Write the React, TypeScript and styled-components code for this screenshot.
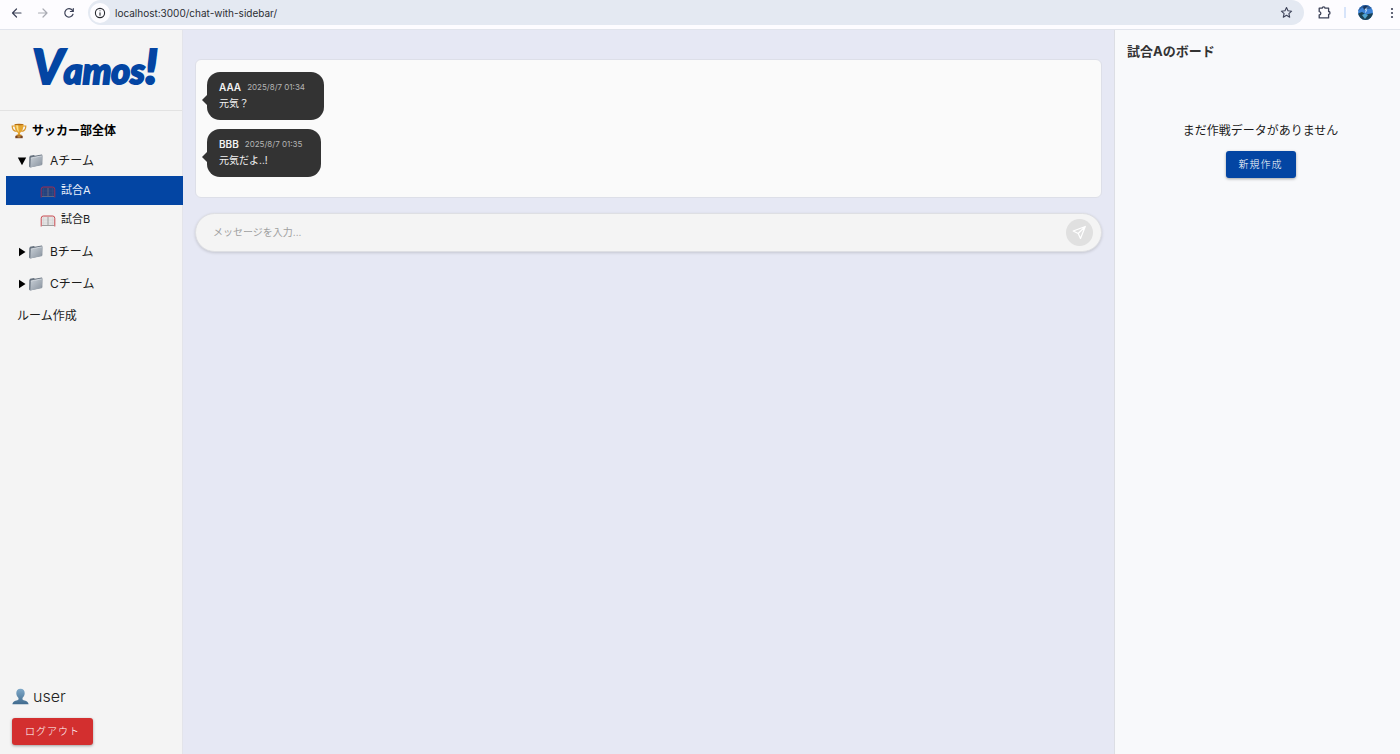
import React, { useState } from "react";
import styled, { createGlobalStyle, css } from "styled-components";

const GlobalStyle = createGlobalStyle`
  * { box-sizing: border-box; }
  html, body, #root { height: 100%; }
  body {
    margin: 0;
    font-family: Inter, "Noto Sans CJK JP", sans-serif;
    font-size: 12px;
    line-height: 16px;
    color: #1c1c1c;
    background: #e6e8f4;
  }
  button, input { font: inherit; color: inherit; }
  button { border: 0; padding: 0; background: none; cursor: pointer; }
  h2, p { margin: 0; }
`;

const Page = styled.div`
  display: flex;
  flex-direction: column;
  min-height: 100%;
`;

const BrowserBar = styled.header`
  display: flex;
  align-items: center;
  height: 30px;
  padding: 0 2px 4px 10px;
  background: #fdfcff;
  border-bottom: 1px solid #e1e4ec;
  color: #3d4258;
`;

const BarGroup = styled.div`
  display: flex;
  align-items: center;
  gap: 13px;
  padding-right: 13px;
`;

const BarButton = styled.button<{ $faded?: boolean }>`
  display: flex;
  align-items: center;
  justify-content: center;
  min-width: 13px;
  height: 16px;
  color: ${(p) => (p.$faded ? "#a9abb3" : "#3d4258")};
`;

const AddressBar = styled.div`
  display: flex;
  flex: 1;
  align-items: center;
  height: 25px;
  padding: 0 11px 0 2px;
  border-radius: 13px;
  background: #e4e9f2;
`;

const SiteInfo = styled.button`
  display: flex;
  align-items: center;
  justify-content: center;
  width: 20px;
  height: 20px;
  border-radius: 50%;
  background: #fdfcff;
  color: #26282e;
`;

const UrlInput = styled.input`
  flex: 1;
  min-width: 0;
  border: 0;
  outline: 0;
  padding: 0 5px;
  background: none;
  font-size: 10px;
  color: #2b2d33;
`;

const BarActions = styled.div`
  display: flex;
  align-items: center;
  gap: 12px;
  padding-left: 13px;
`;

const BarDivider = styled.span`
  width: 2px;
  height: 11px;
  background: #d7e4fa;
`;

const Workspace = styled.div`
  display: flex;
  flex: 1;
`;

const Sidebar = styled.aside`
  display: flex;
  flex-direction: column;
  flex: 0 0 183px;
  background: #f4f4f4;
  border-right: 1px solid #e3e4ea;
`;

const Brand = styled.div`
  display: flex;
  align-items: center;
  justify-content: center;
  height: 81px;
  padding: 0 0 4px 8px;
  border-bottom: 1px solid #e2e2e2;
`;

const Logo = styled.a`
  font-family: Lato, sans-serif;
  font-size: 36px;
  line-height: 48px;
  font-weight: 900;
  font-style: italic;
  color: #0345a3;
  text-decoration: none;
  -webkit-text-stroke: 2px #0345a3;
  paint-order: stroke fill;
  stroke-linejoin: round;
`;

const LogoTall = styled.span`
  font-size: 48px;
`;

const Nav = styled.nav`
  display: flex;
  flex-direction: column;
  padding: 5px 0 0 6px;
`;

const RoomTitle = styled.div`
  display: flex;
  align-items: center;
  gap: 5px;
  height: 30px;
  padding-left: 5px;
  font-weight: 700;
  color: #000;
`;

const FolderRow = styled.button<{ $open?: boolean }>`
  display: flex;
  align-items: center;
  height: ${(p) => (p.$open ? 30 : 32)}px;
  padding-left: 11px;
  text-align: left;
`;

const FolderName = styled.span`
  margin-left: 6px;
`;

const MatchList = styled.div`
  display: flex;
  flex-direction: column;
  margin-bottom: 2px;
`;

const MatchRow = styled.button<{ $active: boolean }>`
  display: flex;
  align-items: center;
  gap: 5px;
  height: 29px;
  padding: 0 0 1px 34px;
  font-size: 11px;
  margin-right: -1px;
  svg { margin-top: 4px; }
  ${(p) =>
    p.$active &&
    css`
      background: #0345a3;
      color: #e8eefa;
    `}
`;

const SidebarFooter = styled.div`
  display: flex;
  flex-direction: column;
  align-items: flex-start;
  gap: 12px;
  margin-top: auto;
  padding: 0 12px 9px;
`;

const UserRow = styled.div`
  display: flex;
  align-items: center;
  gap: 4px;
  font-size: 16px;
  line-height: 20px;
  font-weight: 300;
  color: #222;
`;

const ActionButton = styled.button<{ $tone: "danger" | "primary" }>`
  height: 27px;
  padding: 0 13px 1px;
  border-radius: 3px;
  background: ${(p) => (p.$tone === "danger" ? "#d32f2f" : "#0345a3")};
  color: #fff;
  font-size: 10px;
  font-weight: 300;
  letter-spacing: 1px;
  box-shadow: 0 1px 3px rgba(0, 0, 0, 0.35);
`;

const Main = styled.main`
  display: flex;
  flex-direction: column;
  flex: 1;
  min-width: 0;
  gap: 15px;
  padding: 29px 12px 12px;
`;

const MessageList = styled.section`
  display: flex;
  flex-direction: column;
  align-items: flex-start;
  gap: 9px;
  padding: 12px 11px 20px;
  border: 1px solid #dddfe8;
  border-radius: 6px;
  background: #fafafa;
`;

const Bubble = styled.article`
  position: relative;
  padding: 7px 19px 9px 12px;
  border-radius: 13px;
  background: #333;
  color: #f2f2f2;
  font-size: 10px;
  &::before {
    content: "";
    position: absolute;
    left: -5px;
    top: 22px;
    border: solid transparent;
    border-width: 6px 6px 6px 0;
    border-right-color: #333;
  }
`;

const BubbleHead = styled.div`
  display: flex;
  align-items: center;
  gap: 6px;
`;

const Sender = styled.strong`
  font-weight: 600;
`;

const SentAt = styled.time`
  font-size: 8px;
  color: #b5b5b5;
`;

const Composer = styled.form`
  display: flex;
  align-items: center;
  height: 39px;
  padding: 0 8px 1px 17px;
  border: 1px solid #dedfe3;
  border-radius: 20px;
  background: #f4f4f4;
  box-shadow: 0 1px 3px rgba(0, 0, 0, 0.15);
`;

const MessageInput = styled.input`
  flex: 1;
  min-width: 0;
  padding: 0;
  border: 0;
  outline: 0;
  background: none;
  font-size: 10px;
  &::placeholder { color: #a0a0a0; opacity: 1; }
`;

const SendButton = styled.button`
  display: flex;
  align-items: center;
  justify-content: center;
  width: 27px;
  height: 27px;
  border-radius: 50%;
  background: #e0e0e0;
`;

const BoardPanel = styled.aside`
  flex: 0 0 286px;
  padding: 11px 6px 11px 12px;
  border-left: 1px solid #dcdee4;
  background: #f8f9fb;
`;

const BoardTitle = styled.h2`
  font-size: 13px;
  line-height: 20px;
  font-weight: 700;
  color: #333;
`;

const EmptyBoard = styled.div`
  display: flex;
  flex-direction: column;
  align-items: center;
  gap: 12px;
  padding-top: 62px;
`;

const stroke = {
  fill: "none",
  stroke: "currentColor",
  strokeLinecap: "round" as const,
  strokeLinejoin: "round" as const,
};

const ArrowLeft = () => (
  <svg width="12" height="12" viewBox="0 0 12 12" {...stroke} strokeWidth="1.2">
    <path d="M10 6H1.500M5.500 2l-4 4 4 4" />
  </svg>
);

const ArrowRight = () => (
  <svg width="12" height="12" viewBox="0 0 12 12" {...stroke} strokeWidth="1.2">
    <path d="M1.5 6H10M6 2l4 4-4 4" />
  </svg>
);

const Reload = () => (
  <svg width="12" height="12" viewBox="0 0 12 12" {...stroke} strokeWidth="1.2">
    <path d="M10 7.2A4.2 4.2 0 1 1 9.4 3.4L10.2 4.4M10.3 1.6v2.9H7.4" />
  </svg>
);

const Info = () => (
  <svg width="12" height="12" viewBox="0 0 12 12" {...stroke} strokeWidth="1.1">
    <circle cx="6" cy="6" r="4.6" />
    <path d="M6 5.7v2.6M6 3.7v.1" />
  </svg>
);

const Star = () => (
  <svg width="13" height="13" viewBox="0 0 13 13" {...stroke} strokeWidth="1.1">
    <path d="m6.5 1.5 1.5 3.3 3.6.4-2.7 2.4.8 3.6-3.2-1.9-3.2 1.9.8-3.6L1.4 5.2 5 4.8z" />
  </svg>
);

const Puzzle = () => (
  <svg width="15" height="15" viewBox="0 0 15 15" {...stroke} strokeWidth="1.3">
    <path d="M2.200 3.200h3C5.200 1.400 8 1.400 8 3.200h3.600v3.300c1.900 0 1.900 2.800 0 2.800v3.600H2.200V10c2.200-.2 2.200-3.200 0-3.400z" />
  </svg>
);

const Avatar = () => (
  <svg width="15" height="15" viewBox="0 0 15 15">
    <defs>
      <clipPath id="avatarClip"><circle cx="7.500" cy="7.500" r="7.400" /></clipPath>
    </defs>
    <g clipPath="url(#avatarClip)">
      <path d="M0 0h15v15H0z" fill="#3c82d6" />
      <path d="M0 0h15v3L11 4 4 3 0 6z" fill="#2d5f9e" />
      <path d="M0 8.500 4 7l4 2.500L15 8v7H0z" fill="#1c4254" />
      <path d="m4 10 3-1.500L10 10l-3 4z" fill="#4fa3cf" />
      <path d="M5 1.500 8 .5l2 1.500-2 2.500-2 .5z" fill="#17365f" />
      <path d="m9 2.500-2 2.200h1.600L7.500 7.500" fill="none" stroke="#d9efff" strokeWidth=".9" />
    </g>
  </svg>
);

const Dots = () => (
  <svg width="4" height="12" viewBox="0 0 4 12" fill="#3d4258">
    <circle cx="2" cy="2" r="1.1" />
    <circle cx="2" cy="6" r="1.1" />
    <circle cx="2" cy="10" r="1.1" />
  </svg>
);

const Trophy = () => (
  <svg width="16" height="16" viewBox="0 0 16 16">
    <path d="M4 3H1.2c-.1 3 1.5 5 4.4 5.5M12 3h2.8c.1 3-1.5 5-4.4 5.5" fill="none" stroke="#d9962a" strokeWidth="1.2" />
    <path d="M3.5 1.2h9C12.5 6 11 9 9 9.7v2.2H7V9.7C5 9 3.5 6 3.5 1.2z" fill="#e5a52f" />
    <path d="M5.2 2h2c0 3 .3 5 .8 7C6.300 8 5.300 5.500 5.200 2z" fill="#ffe189" />
    <ellipse cx="8" cy="1.500" rx="4.500" ry=".8" fill="#b36b12" />
    <path d="M5.800 11.500h4.400l.8 1.500H5z" fill="#c98722" />
    <path d="M4.300 12.800h7.400v2.400H4.300z" fill="#76401f" />
    <path d="M6.500 13.400h3v1h-3z" fill="#e0ae55" />
  </svg>
);

const Folder = () => (
  <svg width="16" height="16" viewBox="0 0 16 16">
    <defs>
      <linearGradient id="folderFront" x1="0" y1="0" x2="1" y2="1">
        <stop offset="0" stopColor="#c9d0d7" />
        <stop offset="1" stopColor="#87919d" />
      </linearGradient>
    </defs>
    <path d="M1.300 4.200 2 2.800l4-.8.8.8 7-1.300.5.500v9.500L2 14.500l-.9-1z" fill="#66717e" />
    <path d="m2.800 5 11-2.200.7.500-.8 9L2.300 14.500z" fill="url(#folderFront)" />
    <path d="m2.800 5 11-2.200" stroke="#e8edf1" strokeWidth=".7" />
  </svg>
);

const Triangle = ({ open }: { open: boolean }) => (
  <svg width="11" height="10" viewBox="0 0 11 10" fill="#000">
    <path d={open ? "M.8 1.500h8.400L5 9.200z" : "M2 .8 8.500 5 2 9.200z"} />
  </svg>
);

const Goal = ({ active }: { active: boolean }) => (
  <svg width="16" height="12" viewBox="0 0 16 12">
    <path d="M1.500 11V3l1.500-2h10l1.500 2v8z" fill={active ? "#25427d" : "#e4e3e3"} />
    <path d="M3.500 2v8M12.500 2v8M2 5h12M2 8h12" stroke={active ? "#34508a" : "#d2d0d0"} strokeWidth=".5" />
    <path d="M8 2v8M2 10.500h12" stroke={active ? "#6f7184" : "#8d8d8d"} strokeWidth=".8" />
    <path d="M1.200 11.500V3.200Q1.300 1 3.300 1h9.400q2 0 2.100 2.200v8.300" fill="none" stroke={active ? "#a02e51" : "#c94b51"} strokeWidth="1" />
  </svg>
);

const Person = () => (
  <svg width="17" height="17" viewBox="0 0 17 17">
    <defs>
      <linearGradient id="personFill" x1="0" y1="0" x2="0" y2="1">
        <stop offset="0" stopColor="#7fa9c9" />
        <stop offset="1" stopColor="#416b8e" />
      </linearGradient>
    </defs>
    <path
      d="M8.500.8c2.800 0 4.300 1.800 4.200 4.500-.1 2-1 3.700-2.200 4.800v1.400c.5 1 5.700 1 6.100 4.700H.4c.4-3.700 5.600-3.700 6.100-4.700v-1.400C5.300 9 4.400 7.300 4.300 5.300 4.200 2.600 5.700.8 8.500.8z"
      fill="url(#personFill)"
    />
  </svg>
);

const Send = () => (
  <svg width="15" height="15" viewBox="0 0 15 15" {...stroke} stroke="#fff" strokeWidth="1.200">
    <path d="M13.300 1.500 1.200 6l5 2.500 2.300 5zM13.300 1.500 6.200 8.500" />
  </svg>
);

const messages = [
  { sender: "AAA", sentAt: "2025/8/7 01:34", body: "元気？" },
  { sender: "BBB", sentAt: "2025/8/7 01:35", body: "元気だよ..!" },
];

const matches = ["試合A", "試合B"];

export default function App() {
  const [selected, setSelected] = useState("試合A");
  const [draft, setDraft] = useState("");

  return (
    <>
      <GlobalStyle />
      <Page>
        <BrowserBar>
          <BarGroup>
            <BarButton aria-label="戻る"><ArrowLeft /></BarButton>
            <BarButton aria-label="進む" $faded><ArrowRight /></BarButton>
            <BarButton aria-label="再読み込み"><Reload /></BarButton>
          </BarGroup>
          <AddressBar>
            <SiteInfo aria-label="サイト情報"><Info /></SiteInfo>
            <UrlInput aria-label="アドレス" defaultValue="localhost:3000/chat-with-sidebar/" />
            <BarButton aria-label="ブックマーク"><Star /></BarButton>
          </AddressBar>
          <BarActions>
            <BarButton aria-label="拡張機能"><Puzzle /></BarButton>
            <BarDivider />
            <BarButton aria-label="プロフィール"><Avatar /></BarButton>
            <BarButton aria-label="メニュー"><Dots /></BarButton>
          </BarActions>
        </BrowserBar>
        <Workspace>
          <Sidebar>
            <Brand>
              <Logo href="#"><LogoTall>V</LogoTall>amos<LogoTall>!</LogoTall></Logo>
            </Brand>
            <Nav>
              <RoomTitle><Trophy />サッカー部全体</RoomTitle>
              <FolderRow $open><Triangle open /><Folder /><FolderName>Aチーム</FolderName></FolderRow>
              <MatchList>
                {matches.map((name) => (
                  <MatchRow key={name} $active={name === selected} onClick={() => setSelected(name)}>
                    <Goal active={name === selected} />
                    {name}
                  </MatchRow>
                ))}
              </MatchList>
              <FolderRow><Triangle open={false} /><Folder /><FolderName>Bチーム</FolderName></FolderRow>
              <FolderRow><Triangle open={false} /><Folder /><FolderName>Cチーム</FolderName></FolderRow>
              <FolderRow>ルーム作成</FolderRow>
            </Nav>
            <SidebarFooter>
              <UserRow><Person />user</UserRow>
              <ActionButton $tone="danger">ログアウト</ActionButton>
            </SidebarFooter>
          </Sidebar>
          <Main>
            <MessageList>
              {messages.map((m) => (
                <Bubble key={m.sender}>
                  <BubbleHead>
                    <Sender>{m.sender}</Sender>
                    <SentAt>{m.sentAt}</SentAt>
                  </BubbleHead>
                  <p>{m.body}</p>
                </Bubble>
              ))}
            </MessageList>
            <Composer onSubmit={(e) => e.preventDefault()}>
              <MessageInput
                aria-label="メッセージ"
                placeholder="メッセージを入力..."
                value={draft}
                onChange={(e) => setDraft(e.target.value)}
              />
              <SendButton aria-label="送信"><Send /></SendButton>
            </Composer>
          </Main>
          <BoardPanel>
            <BoardTitle>{selected}のボード</BoardTitle>
            <EmptyBoard>
              <p>まだ作戦データがありません</p>
              <ActionButton $tone="primary">新規作成</ActionButton>
            </EmptyBoard>
          </BoardPanel>
        </Workspace>
      </Page>
    </>
  );
}
